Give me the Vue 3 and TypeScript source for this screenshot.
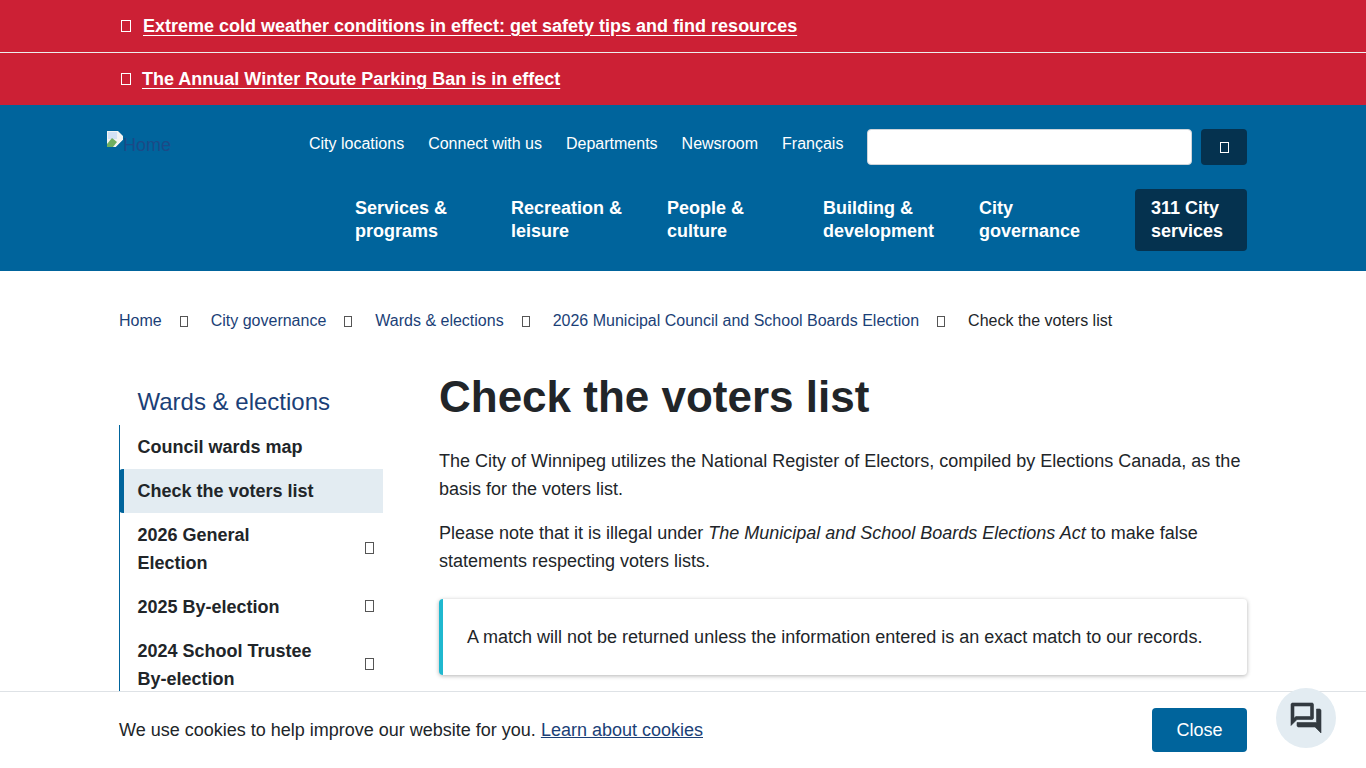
<template>
  <div class="page">
    <div v-for="(alert, i) in alerts" :key="i" class="alert" :class="{ 'alert-line': i === 0 }">
      <div class="container alert-row">
        <span class="tofu tofu-white"></span>
        <a href="#" class="alert-link">{{ alert }}</a>
      </div>
    </div>

    <header class="header">
      <div class="container">
        <div class="header-top">
          <a href="#" class="logo">
            <svg class="broken" width="16" height="16" viewBox="0 0 16 16">
              <path d="M0 0h11l5 5v4l-7 7H0z" fill="#f2f4f2" />
              <path d="M1 1h9v7H1z" fill="#d3e2f5" />
              <path d="M0 13l5-6 5 4-4 5H0z" fill="#6fae5f" />
              <path d="M16 9v7H9z" fill="#00649c" />
            </svg>Home
          </a>
          <nav class="utility">
            <a v-for="link in utilityLinks" :key="link" href="#">{{ link }}</a>
          </nav>
          <input class="search" type="text" aria-label="Search" />
          <button class="search-btn" aria-label="Search"><span class="tofu tofu-white tofu-search"></span></button>
        </div>
        <nav class="mainnav">
          <a v-for="item in mainNav" :key="item" href="#" class="mainnav-item">{{ item }}</a>
          <a href="#" class="mainnav-item mainnav-311">311 City services</a>
        </nav>
      </div>
    </header>

    <div class="container">
      <nav class="crumbs">
        <template v-for="crumb in crumbs" :key="crumb">
          <a href="#">{{ crumb }}</a>
          <span class="tofu tofu-crumb"></span>
        </template>
        <span class="crumb-current">Check the voters list</span>
      </nav>

      <div class="layout">
        <aside class="side">
          <a href="#" class="side-title">Wards &amp; elections</a>
          <ul class="side-list">
            <li v-for="item in sideItems" :key="item.label" class="side-item" :class="{ active: item.active }">
              <a href="#" class="side-link">{{ item.label }}</a>
              <span v-if="item.sub" class="tofu tofu-dark"></span>
            </li>
          </ul>
        </aside>
        <main class="content">
          <h1>Check the voters list</h1>
          <p>The City of Winnipeg utilizes the National Register of Electors, compiled by Elections Canada, as the basis for the voters list.</p>
          <p>Please note that it is illegal under <em>The Municipal and School Boards Elections Act</em> to make false statements respecting voters lists.</p>
          <div class="callout">A match will not be returned unless the information entered is an exact match to our records.</div>
        </main>
      </div>
    </div>

    <div class="cookie">
      <div class="container cookie-row">
        <span>We use cookies to help improve our website for you. <a href="#">Learn about cookies</a></span>
        <button class="close">Close</button>
      </div>
    </div>
    <button class="chat" aria-label="Chat">
      <svg width="36" height="36" viewBox="0 0 24 24" fill="#333a40" stroke="#333a40" stroke-width="0.4">
        <path d="M15 4v7H5.17L4 12.17V4h11m1-2H3c-.55 0-1 .45-1 1v14l4-4h10c.55 0 1-.45 1-1V3c0-.55-.45-1-1-1zm5 4h-2v9H6v2c0 .55.45 1 1 1h11l4 4V7c0-.55-.45-1-1-1z" />
      </svg>
    </button>
  </div>
</template>

<script setup lang="ts">
const alerts = [
  'Extreme cold weather conditions in effect: get safety tips and find resources',
  'The Annual Winter Route Parking Ban is in effect'
];

const utilityLinks = ['City locations', 'Connect with us', 'Departments', 'Newsroom', 'Français'];

const mainNav = [
  'Services & programs',
  'Recreation & leisure',
  'People & culture',
  'Building & development',
  'City governance'
];

const crumbs = [
  'Home',
  'City governance',
  'Wards & elections',
  '2026 Municipal Council and School Boards Election'
];

const sideItems = [
  { label: 'Council wards map' },
  { label: 'Check the voters list', active: true },
  { label: '2026 General Election', sub: true },
  { label: '2025 By-election', sub: true },
  { label: '2024 School Trustee By-election', sub: true }
];
</script>

<style>
html,
body {
  margin: 0;
  overflow: hidden;
}
</style>

<style scoped>
.page {
  height: 768px;
  overflow: hidden;
  font-family: "Liberation Sans", Arial, sans-serif;
  font-size: 18px;
  line-height: 28px;
  color: #212529;
  background: #fff;
}

.container {
  width: 1128px;
  margin: 0 auto;
}

a {
  color: inherit;
  text-decoration: none;
}

.tofu {
  display: inline-block;
  box-sizing: border-box;
  width: 10px;
  height: 12px;
  border: 1px solid #555;
  flex: none;
}

.tofu-white {
  border-color: #fff;
}

.tofu-search {
  width: 9px;
  height: 11px;
}

.alert {
  background: #cc2035;
  color: #fff;
  height: 52px;
}

.alert-line {
  border-bottom: 1px solid #eee;
}

.alert-row {
  display: flex;
  align-items: center;
  gap: 12px;
  height: 52px;
  padding-left: 2px;
  box-sizing: border-box;
}

.alert + .alert .alert-row {
  gap: 11px;
}

.alert-link {
  font-weight: 700;
  text-decoration: underline;
  text-underline-offset: 3px;
}

.header {
  background: #00649c;
  height: 166px;
  color: #fff;
}

.header-top {
  display: flex;
  align-items: flex-start;
  padding-top: 24px;
  height: 36px;
}

.logo {
  display: flex;
  align-items: flex-start;
  margin-left: -12px;
  width: 202px;
  color: #1b4a87;
  font-size: 18px;
  line-height: 28px;
  padding-top: 2px;
}

.utility {
  display: flex;
  gap: 24px;
  width: 558px;
  font-size: 16px;
  line-height: 28px;
  padding-top: 1px;
}

.search {
  box-sizing: border-box;
  width: 325px;
  height: 36px;
  border: 1px solid #ced4da;
  border-radius: 4px;
  background: #fff;
  padding: 0;
}

.search-btn {
  display: flex;
  align-items: center;
  justify-content: center;
  width: 46px;
  height: 36px;
  margin-left: 9px;
  border: 0;
  border-radius: 4px;
  background: #05324f;
  padding: 0;
}

.mainnav {
  display: flex;
  margin-top: 24px;
  margin-left: 220px;
}

.mainnav-item {
  box-sizing: border-box;
  width: 156px;
  height: 62px;
  padding: 8px 16px;
  font-size: 18px;
  font-weight: 700;
  line-height: 23px;
}

.mainnav-311 {
  width: 112px;
  margin-left: 16px;
  background: #05324f;
  border-radius: 4px;
}

.crumbs {
  display: flex;
  align-items: center;
  height: 28px;
  margin-top: 36px;
  font-size: 16px;
  line-height: 28px;
  color: #1b3f77;
}

.tofu-crumb {
  margin: 0 23px 0 18px;
  width: 8px;
  height: 11px;
}

.crumb-current {
  color: #212529;
}

.layout {
  display: grid;
  grid-template-columns: 264px 808px;
  column-gap: 56px;
  margin-top: 35px;
}

.side-title {
  display: block;
  padding-left: 18.5px;
  font-size: 24px;
  line-height: 36px;
  margin-top: 14px;
  color: #1b3f77;
}

.side-list {
  list-style: none;
  margin: 5px 0 0;
  padding: 0;
  border-left: 1px solid #00649c;
}

.side-item {
  display: flex;
  align-items: center;
  justify-content: space-between;
  padding: 8px 9px 8px 17.5px;
  font-weight: 700;
  position: relative;
}

.side-link {
  width: 180px;
}

.active .side-link {
  width: auto;
}

.side-item.active {
  background: #e3ecf2;
  margin-left: 4px;
  padding-left: 13.5px;
}

.side-item.active::before {
  content: "";
  position: absolute;
  left: -5px;
  top: 0;
  bottom: 0;
  width: 5px;
  background: #00649c;
  border-radius: 4px 0 0 4px;
}

.tofu-dark {
  width: 9px;
  margin-bottom: 2px;
}

h1 {
  margin: 0 0 24px;
  font-size: 44px;
  line-height: 53px;
  font-weight: 700;
  color: #212529;
}

p {
  margin: 0 0 16px;
}

.callout {
  margin-top: 24px;
  padding: 24px;
  border-left: 4px solid #1fb8cf;
  border-radius: 4px;
  box-shadow: 0 1px 4px rgba(0, 0, 0, 0.3);
}

.cookie {
  position: fixed;
  left: 0;
  right: 0;
  bottom: 0;
  height: 76px;
  background: #fff;
  border-top: 1px solid #dee2e6;
}

.cookie-row {
  display: flex;
  align-items: center;
  justify-content: space-between;
  height: 76px;
}

.cookie-row a {
  color: #1b3f77;
  text-decoration: underline;
}

.close {
  width: 95px;
  height: 44px;
  border: 0;
  border-radius: 4px;
  background: #00649c;
  color: #fff;
  font-family: inherit;
  font-size: 18px;
}

.chat {
  position: fixed;
  left: 1276px;
  top: 688px;
  width: 60px;
  height: 60px;
  border: 0;
  border-radius: 50%;
  padding: 0;
  background: #e3ecf2;
  display: flex;
  align-items: center;
  justify-content: center;
}
</style>
